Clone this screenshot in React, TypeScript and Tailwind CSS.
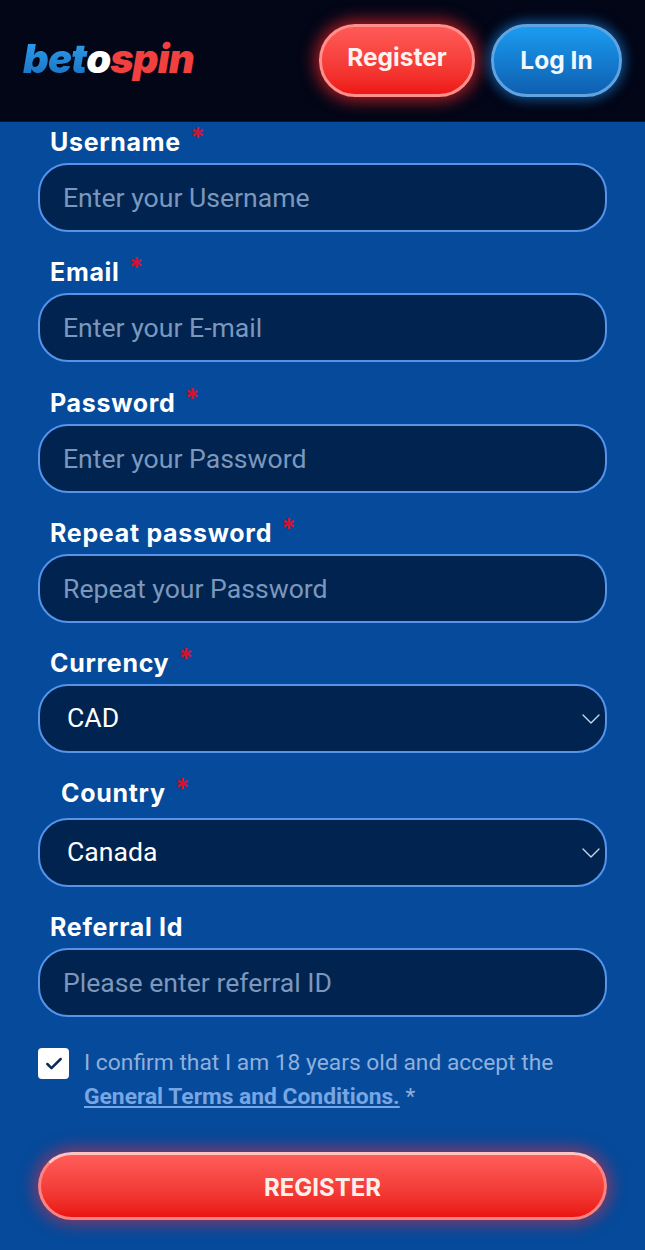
import { Check, ChevronDown } from "lucide-react";

const fieldClass =
  "h-[69px] w-full rounded-[30px] border-2 border-[#5594ea] bg-[#00244f] pl-[23px] pr-10 font-['Roboto',sans-serif] text-[26.6px] text-white outline-none placeholder:text-[#7c97bd]";

function Label({ text, required = true, className = "" }: { text: string; required?: boolean; className?: string }) {
  return (
    <label className={`flex h-[32px] items-center pl-3 font-['Inter',sans-serif] text-[25px] leading-[32px] font-bold tracking-[0.7px] text-white ${className}`}>
      {text}
      {required && <span className="relative -top-[5px] ml-[9px] text-[27px] leading-none text-[#d3122f]">*</span>}
    </label>
  );
}

function TextField({ label, placeholder, type = "text", required = true, className = "" }: { label: string; placeholder: string; type?: string; required?: boolean; className?: string }) {
  return (
    <div className={`flex flex-col gap-[5px] ${className}`}>
      <Label text={label} required={required} />
      <input type={type} placeholder={placeholder} className={fieldClass} />
    </div>
  );
}

function SelectField({ label, value, labelClass = "" }: { label: string; value: string; labelClass?: string }) {
  return (
    <div className="flex flex-col gap-[5px]">
      <Label text={label} className={labelClass} />
      <div className="relative">
        <select defaultValue={value} className={`${fieldClass} appearance-none pb-[2px] pl-[27px]`}>
          <option value={value}>{value}</option>
        </select>
        <ChevronDown className="pointer-events-none absolute top-1/2 right-[0.5px] -translate-y-1/2 text-[#c5d6ee]" size={32} strokeWidth={1} />
      </div>
    </div>
  );
}

export default function App() {
  return (
    <div className="min-h-[1250px] w-full overflow-hidden bg-[#054a9b]">
      <header className="flex h-[122px] items-center justify-between border-b border-[#01183a] bg-[#020617] pr-[23px] pl-[23px]">
        <div className="mb-[3px] font-['Inter',sans-serif] text-[40px] leading-none font-black tracking-[-0.9px] italic">
          <span className="bg-gradient-to-b from-[#2fa5f5] to-[#1a6cbc] bg-clip-text pr-[2px] text-transparent">bet</span>
          <span className="-ml-[2px] text-white">o</span>
          <span className="text-[#f1403f]">spin</span>
        </div>
        <div className="flex items-center gap-4">
          <button className="mt-[-1px] h-[73px] w-[156px] rounded-[36px] border-[3px] border-[#ff8f8c] bg-gradient-to-b from-[#ff5a57] to-[#ee1614] pb-[5px] font-['Inter',sans-serif] text-[24.5px] font-bold text-[#fdf2f0] shadow-[0_0_16px_4px_rgba(255,40,40,0.65)]">
            Register
          </button>
          <button className="mt-[-1px] h-[73px] w-[131px] rounded-[36px] border-[3px] border-[#5fa3e0] bg-gradient-to-b from-[#1b9cf1] to-[#0f5fb0] font-['Inter',sans-serif] text-[24.5px] font-bold text-[#f2f8fd] shadow-[0_0_12px_3px_rgba(30,140,240,0.55)]">
            Log In
          </button>
        </div>
      </header>

      <form className="flex flex-col px-[38px] pt-[4px]">
        <div className="flex flex-col gap-[24px]">
          <TextField label="Username" placeholder="Enter your Username" />
          <TextField label="Email" placeholder="Enter your E-mail" type="email" />
          <TextField label="Password" placeholder="Enter your Password" type="password" className="mt-[1px]" />
          <TextField label="Repeat password" placeholder="Repeat your Password" type="password" />
          <SelectField label="Currency" value="CAD" />
        </div>
        <div className="mt-[24px] flex flex-col gap-[24px]">
          <div className="[&>div>div]:mt-[4px]">
            <SelectField label="Country" value="Canada" labelClass="pl-[23px]" />
          </div>
          <TextField label="Referral Id" placeholder="Please enter referral ID" required={false} />
        </div>

        <div className="mt-[29px] flex gap-[15px]">
          <span className="mt-[2px] flex h-[31px] w-[31px] shrink-0 items-center justify-center rounded-[4px] bg-white">
            <Check size={20} strokeWidth={3} className="text-[#0b2a55]" />
          </span>
          <p className="font-['Roboto',sans-serif] text-[22.8px] leading-[34px] text-[#8fb0dc]">
            I confirm that I am 18 years old and accept the
            <br />
            <a href="#" className="font-bold text-[#78a6e2] underline underline-offset-2">General Terms and Conditions.</a> *
          </p>
        </div>

        <button type="button" className="mt-[38px] h-[68px] w-full rounded-[34px] border-[3px] border-t-[#ffc4c2] border-r-[#ff8280] border-b-[#ff8280] border-l-[#ff8280] bg-gradient-to-b from-[#ff5c59] to-[#ea1210] pt-[3px] font-['Inter',sans-serif] text-[24px] font-bold text-[#fdeeec] shadow-[0_0_16px_4px_rgba(255,40,50,0.5)]">
          REGISTER
        </button>
      </form>
    </div>
  );
}
